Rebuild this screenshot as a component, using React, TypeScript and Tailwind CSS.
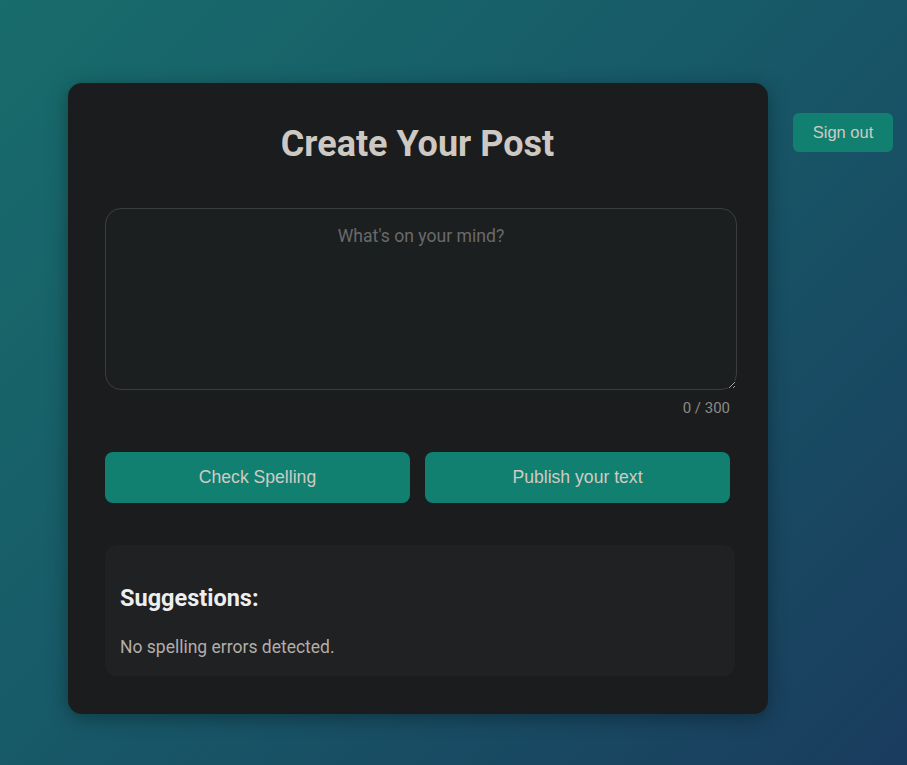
import React, { useState } from "react";

export default function App() {
  const [text, setText] = useState("");
  return (
    <div
      className="min-h-[765px] w-full bg-[linear-gradient(135deg,#186c6b_0%,#175a68_45%,#1a3c5e_100%)] flex items-start pt-[83px] pl-[68px] gap-[25px]"
      style={{ fontFamily: "Roboto, 'Liberation Sans', sans-serif" }}
    >
      <div className="w-[700px] h-[631px] bg-[#1b1c1e] rounded-[14px] shadow-[0_4px_20px_rgba(0,0,0,0.35)] pl-[37px] pr-[38px] pt-[39px] flex flex-col">
        <h1 className="text-[36px] font-bold text-[#cdc8c2] text-center leading-[44px]">Create Your Post</h1>
        <div className="mt-[42px]">
          <textarea
            value={text}
            onChange={(e) => setText(e.target.value)}
            placeholder="What's on your mind?"
            className="block w-[632px] h-[182px] bg-[#1c1f20] border border-[#3c3d3f] rounded-[16px] px-[15px] pt-[16px] text-[17.6px] leading-[22px] text-[#cdc8c2] placeholder:text-[#6a6a6a] text-center outline-none resize-y"
            style={{ fontFamily: "Roboto, sans-serif" }}
          />
          <div className="text-right text-[15px] text-[#8d8a86] mt-[9px] leading-[18px]">0 / 300</div>
        </div>
        <div className="flex gap-[15px] mt-[35px]">
          <button
            className="flex-1 h-[51px] rounded-[8px] bg-[#128070] text-[#cfcbc3] text-[17.6px]"
            style={{ fontFamily: "'Liberation Sans', Arial, sans-serif" }}
          >
            Check Spelling
          </button>
          <button
            className="flex-1 h-[51px] rounded-[8px] bg-[#128070] text-[#cfcbc3] text-[17.6px]"
            style={{ fontFamily: "'Liberation Sans', Arial, sans-serif" }}
          >
            Publish your text
          </button>
        </div>
        <div className="mt-[42px] w-[630px] bg-[#202123] rounded-[12px] px-[15px] pt-[39px] pb-[18px]">
          <h3 className="text-[23.5px] font-bold text-[#eeeeee] leading-[28px]">Suggestions:</h3>
          <p className="mt-[24px] text-[17.5px] text-[#b3aea8] leading-[22px]">No spelling errors detected.</p>
        </div>
      </div>
      <button
        className="mt-[30px] w-[100px] h-[39px] rounded-[6px] bg-[#128070] text-[#cfcbc3] text-[16.5px]"
        style={{ fontFamily: "'Liberation Sans', Arial, sans-serif" }}
      >
        Sign out
      </button>
    </div>
  );
}
